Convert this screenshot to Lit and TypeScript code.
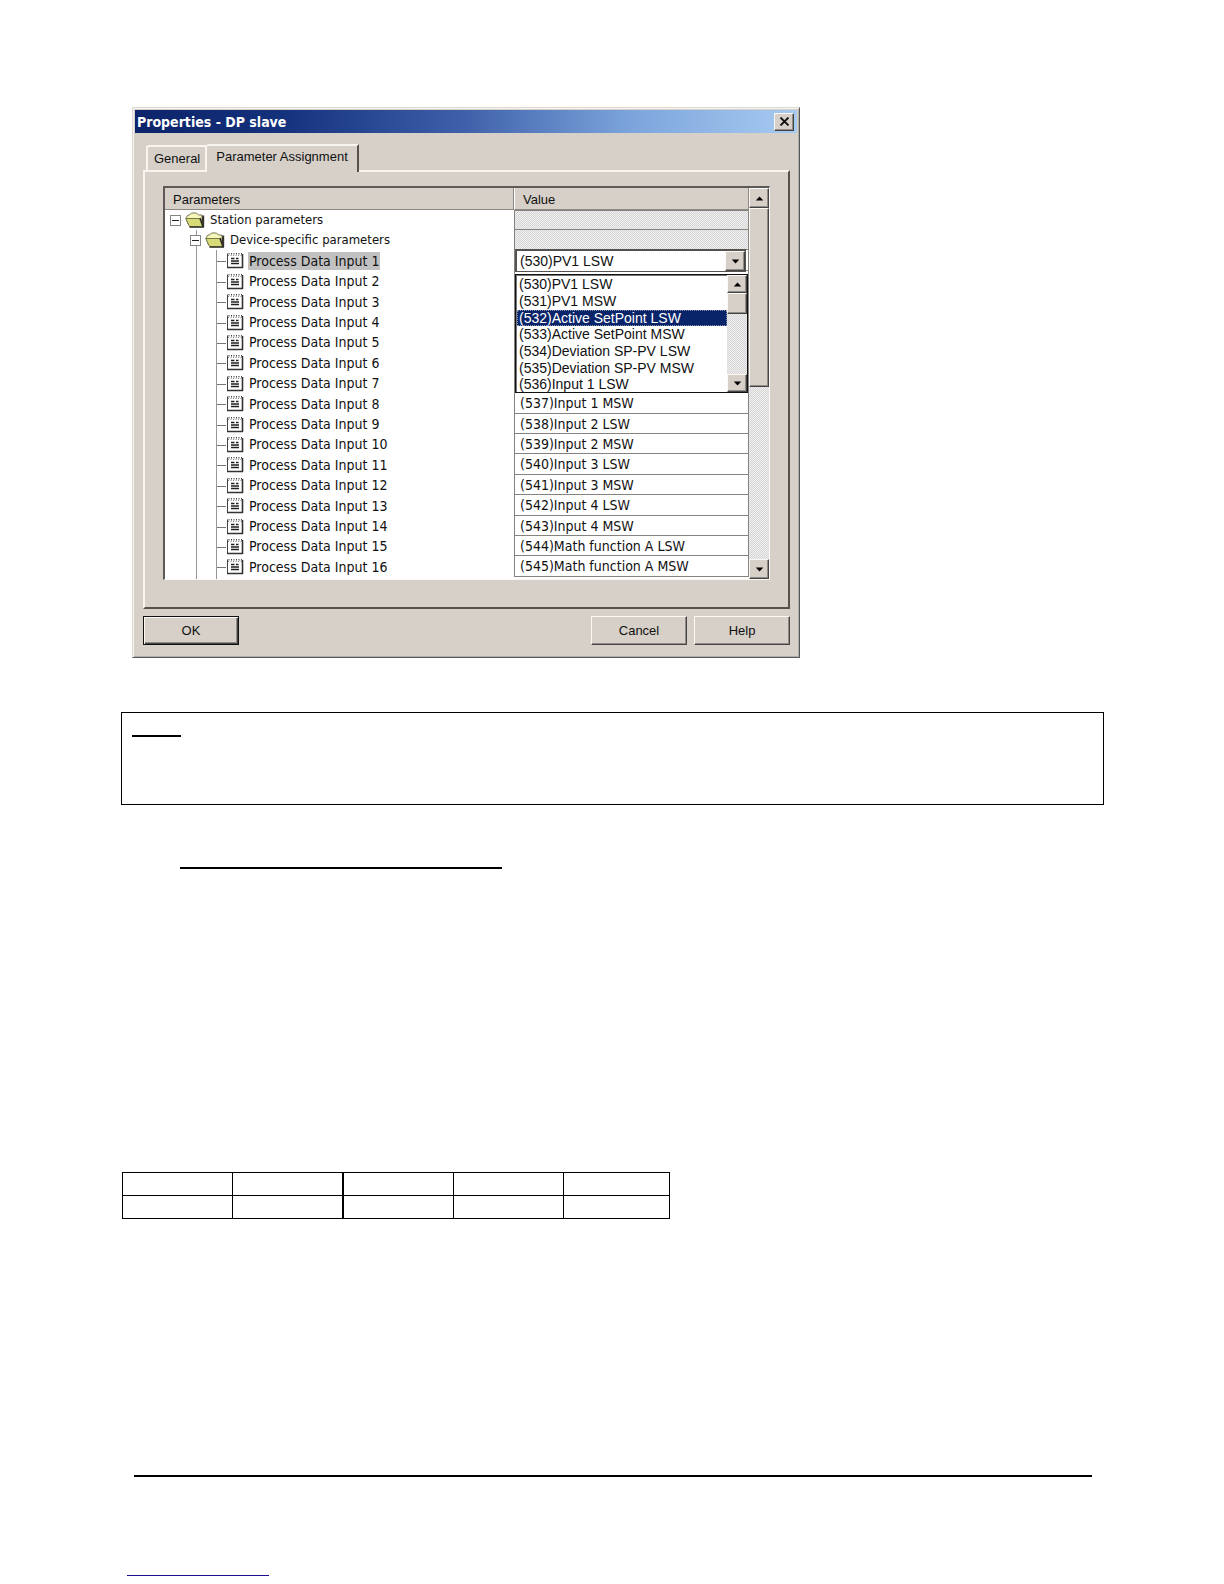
import { LitElement, html, css, svg } from "lit";
import { customElement, state } from "lit/decorators.js";
import { classMap } from "lit/directives/class-map.js";

const VALUES = [
  "(530)PV1 LSW",
  "(531)PV1 MSW",
  "(532)Active SetPoint LSW",
  "(533)Active SetPoint MSW",
  "(534)Deviation SP-PV LSW",
  "(535)Deviation SP-PV MSW",
  "(536)Input 1 LSW",
  "(537)Input 1 MSW",
  "(538)Input 2 LSW",
  "(539)Input 2 MSW",
  "(540)Input 3 LSW",
  "(541)Input 3 MSW",
  "(542)Input 4 LSW",
  "(543)Input 4 MSW",
  "(544)Math function A LSW",
  "(545)Math function A MSW",
];

const minusBox = html`<svg class="box" viewBox="0 0 11 11" aria-hidden="true">
  <rect x=".5" y=".5" width="10" height="10" fill="#fff" stroke="#858585" />
  <path d="M2 5.5h7" stroke="#222" />
</svg>`;

const folder = html`<svg class="folder" viewBox="0 0 21 16" aria-hidden="true">
  <path d="M1 6 3 3h1.500L6.500 1h5l2 2H17v9l-1 2H5L3 12z" fill="#f6f6b8" stroke="#77775a" />
  <path d="M.8 6.500h13.700l3 8H4.500z" fill="#d8dc78" stroke="#77774c" />
  <path d="M15 6l3 8.500M4.500 15.200h14.500" stroke="#22221a" stroke-width="1.200" fill="none" />
  <path d="M17.300 3.500h1.900v11.500h-.8l-1.900-5z" fill="#33332a" />
</svg>`;

const note = html`<svg class="note" viewBox="0 0 17 17" aria-hidden="true">
  <path d="M1 2h14v13H1z" fill="#fff" />
  <path d="M.5 1.500v14M2 2.500v-1.500M4.500 2.500v-1.500M7 2.500v-1.500M9.500 2.500v-1.500M12 2.500v-1.500M14.500 2.500v-1.500" stroke="#444" fill="none" />
  <path d="M1 3.500h14" stroke="#888" stroke-dasharray="1 1.500" />
  <path d="M0 15.500h16M15.500 2v14" stroke="#333" stroke-width="1.600" />
  <path d="M4 6.500h3.500M9 6.500h2.500M4 9h8M4 11.500h8" stroke="#222" stroke-width="1.300" />
</svg>`;

const arrow = (down: boolean) => html`<svg class="arrow" viewBox="0 0 10 6" aria-hidden="true">
  ${down ? svg`<path d="M.5.5h9L5 5.500z" />` : svg`<path d="M.5 5.500h9L5 .5z" />`}
</svg>`;

@customElement("app-root")
export class AppRoot extends LitElement {
  @state() private tab = 1;
  @state() private selected = 0;
  @state() private hot = 2;
  @state() private open = true;

  static styles = css`
    :host {
      display: block;
      background: #fff;
      color: #111;
      --face: #d6d0c8;
      --dark: #55524e;
      font: 13px/16px "DejaVu Sans Condensed", "DejaVu Sans", sans-serif;
    }
    * { box-sizing: border-box; }
    button, select, option { font: 13px/16px "Liberation Sans", Arial, sans-serif; color: #111; border-radius: 0; }
    .page { padding: 107px 120px 8px 121px; }
    .dialog {
      max-width: 668px;
      margin-left: 11px;
      padding: 1px;
      background: var(--face);
      border: 1px solid;
      border-color: #dcd9d4 #55595c #55595c #dcd9d4;
      box-shadow: inset 1px 1px #f6f4f1, inset -1px -1px #b0aca6;
    }
    .inner { padding: 1px; }
    .title {
      display: flex;
      align-items: center;
      justify-content: space-between;
      height: 23px;
      padding: 0 3px 0 2px;
      background: linear-gradient(90deg, #0c246a, #14317c 22%, #3f61aa 50%, #7da5dc 75%, #a6caf0);
      color: #fff;
    }
    .title h1 { margin: 0; font-size: 14px; line-height: 20px; }
    .raised {
      padding: 0;
      background: var(--face);
      border: 1px solid;
      border-color: #fbf9f6 #444 #444 #fbf9f6;
      box-shadow: inset -1px -1px #918c86;
    }
    .close { display: grid; place-items: center; width: 20px; height: 18px; }
    .close svg { width: 11px; height: 9px; }
    .body { padding: 11px 7px 10px 8px; }
    .tabs { display: flex; align-items: flex-end; padding-left: 3px; }
    .tab {
      height: 25px;
      padding: 0 5px 0 6px;
      background: var(--face);
      border: solid #f8f5f0;
      border-width: 2px 1px 0 2px;
      border-radius: 3px 0 0 0;
    }
    .tab.active {
      position: relative;
      height: 28px;
      margin-bottom: -2px;
      padding: 0 9px 4px 9px;
      border-width: 2px 2px 0 1px;
      border-right-color: var(--dark);
    }
    .panel {
      padding: 14px 18px 27px;
      border: 2px solid;
      border-color: #f8f5f0 var(--dark) var(--dark) #f8f5f0;
    }
    .list {
      display: flex;
      background: #fff;
      border: solid;
      border-width: 2px 1px 1px 2px;
      border-color: #5d5956 #fbf9f6 #fbf9f6 #5d5956;
    }
    table { border-collapse: separate; border-spacing: 0; }
    .params { flex: 1; table-layout: fixed; width: 100%; }
    .value-col { width: 235px; }
    th, td { padding: 0; text-align: left; font-weight: normal; }
    .params th {
      height: 22px;
      padding: 3px 8px 0;
      background: var(--face);
      font-family: "Liberation Sans", Arial, sans-serif;
      border: solid #8c8883;
      border-width: 0 1px 1px 0;
    }
    .params th + th { border-left: 1px solid #fff; }
    .params tbody tr { height: 20px; }
    .params tbody tr:nth-child(5n), .params tbody tr:nth-child(5n + 3) { height: 21px; }
    .params tbody tr.rest { height: 2px; }
    .node { display: flex; align-items: center; height: 20px; white-space: nowrap; }
    .l1 { padding-left: 5px; gap: 4px; }
    .l2 { padding-left: 25px; gap: 4px; }
    .l3 { padding-left: 62px; gap: 4px; }
    .guide1 { background: linear-gradient(#96969c, #96969c) 31px 0 / 1px 100% no-repeat; }
    .guide2 {
      background:
        linear-gradient(#96969c, #96969c) 31px 0 / 1px 100% no-repeat,
        linear-gradient(#96969c, #96969c) 51px 0 / 1px 100% no-repeat;
    }
    .leaf {
      background:
        linear-gradient(#96969c, #96969c) 31px 0 / 1px 100% no-repeat,
        linear-gradient(#96969c, #96969c) 51px 0 / 1px 100% no-repeat,
        linear-gradient(#777, #777) 52px 11px / 9px 1px no-repeat;
    }
    .box { width: 11px; height: 11px; }
    .folder { width: 21px; height: 16px; }
    .note { width: 17px; height: 17px; }
    .name { padding: 0 1px; font-size: 14px; line-height: 18px; }
    .current { background: #c1c1c1; }
    .value {
      position: relative;
      padding-left: 5px;
      font-size: 14px;
      white-space: nowrap;
      border: solid #85827f;
      border-width: 0 1px 1px 1px;
    }
    .params tbody tr:first-child .value { border-top-width: 1px; }
    .blank, .track { background: repeating-conic-gradient(#d5d5d5 0 25%, #f0f0f0 0 50%) 0 0 / 2px 2px; }
    .combo {
      position: absolute;
      inset: -1px 2px -2px 0;
      display: flex;
      background: #fff;
      border: solid #55524f;
      border-width: 2px 1px 1px 2px;
    }
    .combo select, .popup option { font-size: 14px; }
    .combo select { flex: 1; min-width: 0; padding: 0 0 0 3px; border: 0; background: #fff; appearance: none; outline: 0; }
    .drop { width: 20px; display: grid; place-items: center; }
    .popup {
      position: absolute;
      z-index: 2;
      top: 24px;
      left: 0;
      right: 0;
      display: flex;
      height: 119px;
      background: #fff;
      border: 1px solid #111;
      box-shadow: inset 1px 1px #777;
    }
    .popup select {
      flex: 1;
      min-width: 0;
      padding: 1px 0 0 1px;
      overflow: hidden;
      border: 0;
      outline: 0;
      background: transparent;
      scrollbar-width: none;
    }
    .popup option { min-height: 0; height: 17px; padding: 0 0 0 2px; line-height: 17px; }
    .popup option:nth-child(3n) { height: 16px; line-height: 16px; }
    .popup option.hot { background: #0a246a; color: #fff; outline: 1px dotted #8a93b5; outline-offset: -1px; }
    .scroll { display: flex; flex-direction: column; width: 20px; }
    .scroll button { display: grid; place-items: center; height: 20px; flex: none; }
    .thumb { height: 179px; }
    .track { flex: 1; }
    .popup .scroll button { height: 18px; }
    .popup .thumb { height: 21px; }
    .arrow { width: 9px; height: 5px; }
    .actions { display: flex; gap: 7px; padding-top: 7px; }
    .action { width: 96px; height: 29px; }
    .ok {
      margin-right: auto;
      border-color: #111;
      box-shadow: inset 1px 1px #fbf9f6, inset -1px -1px #444, inset -2px -2px #918c86;
    }
    .notice { height: 93px; margin-top: 54px; padding: 22px 10px; border: 1px solid #000; }
    .rule { height: 2px; margin: 0; border: 0; background: #000; }
    .notice .rule { width: 49px; }
    .heading { width: 322px; margin: 62px 0 0 59px; }
    .grid { width: 548px; margin: 303px 0 0 1px; border: solid #000; border-width: 1px 0 0 1px; table-layout: fixed; }
    .grid td { height: 23px; border: solid #000; border-width: 0 1px 1px 0; }
    .grid td:nth-child(2) { border-right-width: 2px; }
    .grid .second { width: 111px; }
    .grid .last { width: 106px; }
    .foot { margin: 256px 12px 0 13px; }
    .link { display: block; width: 142px; height: 1px; margin: 98px 0 0 6px; background: #1c0f8c; }
  `;

  private valueCell(i: number) {
    if (i !== 0) return html`<td class="value">${VALUES[i]}</td>`;
    return html`<td class="value">
      <div class="combo">
        <select aria-label="Process Data Input 1" .value=${VALUES[this.selected]}>
          ${VALUES.map((v, n) => html`<option ?selected=${n === this.selected}>${v}</option>`)}
        </select>
        <button class="raised drop" aria-label="Open list" @click=${() => (this.open = !this.open)}>${arrow(true)}</button>
      </div>
      ${this.open
        ? html`<div class="popup">
            <select size="7" aria-label="Available values">
              ${VALUES.slice(0, 7).map(
                (v, n) => html`<option
                  class=${classMap({ hot: n === this.hot })}
                  @mousemove=${() => (this.hot = n)}
                  @click=${() => { this.selected = n; this.open = false; }}
                >${v}</option>`
              )}
            </select>
            <div class="scroll">
              <button class="raised" aria-label="Scroll list up">${arrow(false)}</button>
              <div class="raised thumb"></div>
              <div class="track"></div>
              <button class="raised" aria-label="Scroll list down">${arrow(true)}</button>
            </div>
          </div>`
        : null}
    </td>`;
  }

  render() {
    return html`<main class="page">
      <section class="dialog" role="dialog" aria-labelledby="caption">
        <div class="inner">
          <header class="title">
            <h1 id="caption">Properties - DP slave</h1>
            <button class="raised close" aria-label="Close">
              <svg viewBox="0 0 11 9"><path d="M1.500.5l8 8M9.500.5l-8 8" stroke="#111" stroke-width="1.800" /></svg>
            </button>
          </header>
          <div class="body">
            <div class="tabs" role="tablist">
              ${["General", "Parameter Assignment"].map(
                (t, n) => html`<button
                  role="tab"
                  aria-selected=${n === this.tab}
                  class=${classMap({ tab: true, active: n === this.tab })}
                  @click=${() => (this.tab = n)}
                >${t}</button>`
              )}
            </div>
            <div class="panel" role="tabpanel">
              <div class="list">
                <table class="params">
                  <colgroup><col /><col class="value-col" /></colgroup>
                  <thead><tr><th scope="col">Parameters</th><th scope="col">Value</th></tr></thead>
                  <tbody>
                    <tr>
                      <td><div class="node l1">${minusBox}${folder}<span>Station parameters</span></div></td>
                      <td class="value blank"></td>
                    </tr>
                    <tr>
                      <td class="guide1"><div class="node l2">${minusBox}${folder}<span>Device-specific parameters</span></div></td>
                      <td class="value blank"></td>
                    </tr>
                    ${VALUES.map(
                      (_, i) => html`<tr>
                        <td class="leaf">
                          <div class="node l3">
                            ${note}<span class=${classMap({ name: true, current: i === 0 })}>Process Data Input ${i + 1}</span>
                          </div>
                        </td>
                        ${this.valueCell(i)}
                      </tr>`
                    )}
                    <tr class="rest"><td class="guide2"></td><td></td></tr>
                  </tbody>
                </table>
                <div class="scroll">
                  <button class="raised" aria-label="Scroll up">${arrow(false)}</button>
                  <div class="raised thumb"></div>
                  <div class="track"></div>
                  <button class="raised" aria-label="Scroll down">${arrow(true)}</button>
                </div>
              </div>
            </div>
            <div class="actions">
              <button class="raised action ok">OK</button>
              <button class="raised action">Cancel</button>
              <button class="raised action">Help</button>
            </div>
          </div>
        </div>
      </section>

      <section class="notice"><hr class="rule" /></section>
      <hr class="rule heading" />
      <table class="grid">
        <colgroup><col /><col class="second" /><col /><col /><col class="last" /></colgroup>
        <tbody>
          ${[0, 1].map(() => html`<tr><td></td><td></td><td></td><td></td><td></td></tr>`)}
        </tbody>
      </table>
      <hr class="rule foot" />
      <span class="link"></span>
    </main>`;
  }
}
